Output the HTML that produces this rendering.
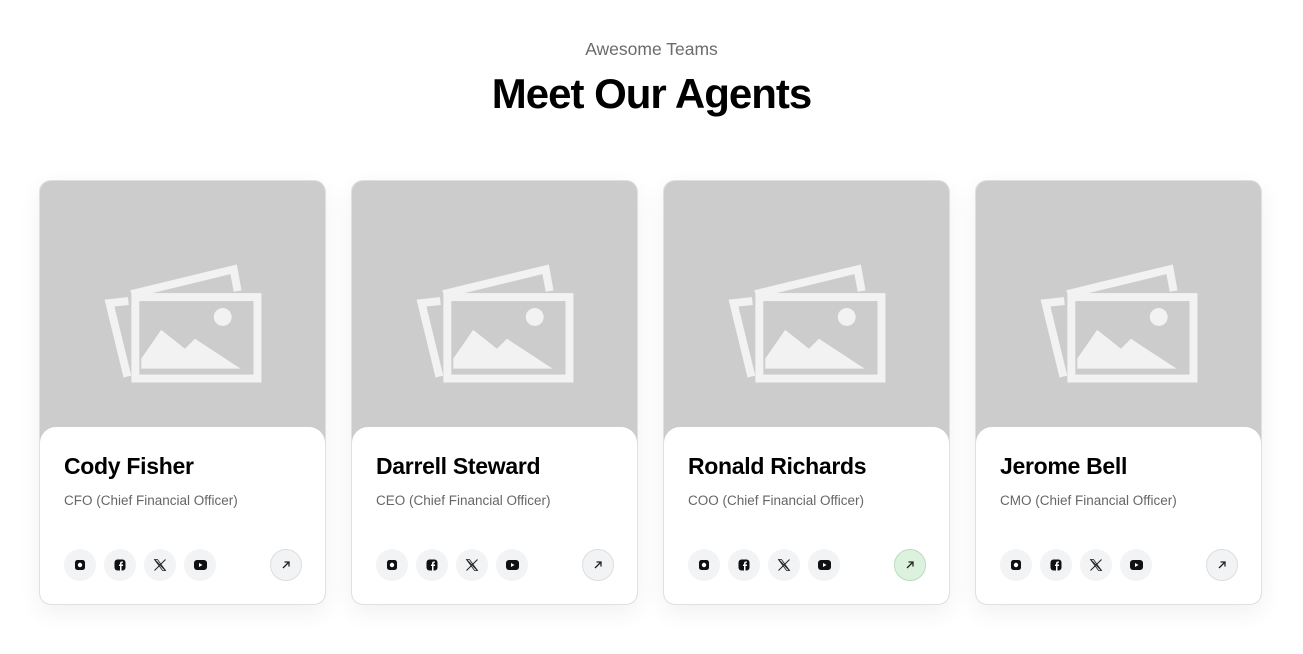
<!DOCTYPE html>
<html><head><meta charset="utf-8"><style>
*{box-sizing:border-box;margin:0;padding:0}
body{width:1303px;height:654px;background:#fff;font-family:"Liberation Sans",sans-serif;position:relative;overflow:hidden}
.sub{position:absolute;top:39px;width:100%;text-align:center;font-size:17.5px;color:#6b6b6b}
h1{position:absolute;top:70px;width:100%;text-align:center;font-size:42px;font-weight:700;color:#000;letter-spacing:-1px}
.card{position:absolute;top:180px;width:287px;height:425px;border:1px solid #e0e0e0;border-radius:12px;overflow:hidden;background:#ccc;box-shadow:0 8px 24px rgba(0,0,0,0.06)}
.img{position:absolute;left:0;top:0;width:100%;height:260px}
.panel{position:absolute;left:0;top:246px;width:100%;bottom:0;background:#fff;border-radius:16px 16px 0 0;padding:0 24px}
.name{position:absolute;top:26px;left:24px;font-size:23px;font-weight:700;color:#000;letter-spacing:-0.3px}
.role{position:absolute;top:66px;left:24px;font-size:13.5px;color:#666}
.ic{position:absolute;top:122px;width:32px;height:32px;border-radius:50%;background:#f2f3f5;display:flex;align-items:center;justify-content:center}
.ar{position:absolute;top:122px;left:230px;width:32px;height:32px;border-radius:50%;background:#f2f3f5;border:1px solid #ddd;display:flex;align-items:center;justify-content:center}
.ar.g{background:#dcf2de;border-color:#b9dcbc}
</style></head><body>
<div class="sub">Awesome Teams</div>
<h1>Meet Our Agents</h1>
<div class="card" style="left:39px">
<svg class="img" viewBox="0 0 287 260"><g fill="none" stroke="#f2f2f2" stroke-width="8"><path d="M89 120 L70 122 L88 196 M92 113 L195 88 L199 110"/><rect x="96" y="116" width="123" height="82"/></g><g fill="#f2f2f2"><circle cx="184" cy="136" r="9"/><path d="M102 188 L102 178 L122 149 L146 168 L156 158 L202 188Z"/></g></svg>
<div class="panel"><div class="name">Cody Fisher</div><div class="role">CFO (Chief Financial Officer)</div>
<div class="ic" style="left:24px"><svg width="12" height="12"><rect x="1" y="1" width="10" height="10" rx="2.5" fill="#111"/><circle cx="6" cy="6" r="2.2" fill="#fff"/></svg></div>
<div class="ic" style="left:64px"><svg width="12" height="12"><rect x="0.5" y="0.5" width="11" height="11" rx="3" fill="#111"/><path d="M7.5 12V7H9V5.5H7.5V4.5c0-.5.3-.7.8-.7H9V2.5H8C6.6 2.5 6 3.3 6 4.5v1H5V7h1v5" fill="#fff"/></svg></div>
<div class="ic" style="left:104px"><svg width="14" height="14"><path d="M1.5 1.5L12.5 12.5M12.5 1.5L1.5 12.5" stroke="#222" stroke-width="1"/><path d="M1.5 1.5h3l8 11h-3z" fill="none" stroke="#222" stroke-width="0.8"/></svg></div>
<div class="ic" style="left:144px"><svg width="13" height="10"><rect width="13" height="10" rx="3" fill="#111"/><path d="M5 3l3.5 2L5 7z" fill="#fff"/></svg></div>
<div class="ar"><svg width="10" height="10"><path d="M2 8L8 2M3.5 2H8V6.5" stroke="#222" stroke-width="1.3" fill="none"/></svg></div>
</div></div>
<div class="card" style="left:351px">
<svg class="img" viewBox="0 0 287 260"><g fill="none" stroke="#f2f2f2" stroke-width="8"><path d="M89 120 L70 122 L88 196 M92 113 L195 88 L199 110"/><rect x="96" y="116" width="123" height="82"/></g><g fill="#f2f2f2"><circle cx="184" cy="136" r="9"/><path d="M102 188 L102 178 L122 149 L146 168 L156 158 L202 188Z"/></g></svg>
<div class="panel"><div class="name">Darrell Steward</div><div class="role">CEO (Chief Financial Officer)</div>
<div class="ic" style="left:24px"><svg width="12" height="12"><rect x="1" y="1" width="10" height="10" rx="2.5" fill="#111"/><circle cx="6" cy="6" r="2.2" fill="#fff"/></svg></div>
<div class="ic" style="left:64px"><svg width="12" height="12"><rect x="0.5" y="0.5" width="11" height="11" rx="3" fill="#111"/><path d="M7.5 12V7H9V5.5H7.5V4.5c0-.5.3-.7.8-.7H9V2.5H8C6.6 2.5 6 3.3 6 4.5v1H5V7h1v5" fill="#fff"/></svg></div>
<div class="ic" style="left:104px"><svg width="14" height="14"><path d="M1.5 1.5L12.5 12.5M12.5 1.5L1.5 12.5" stroke="#222" stroke-width="1"/><path d="M1.5 1.5h3l8 11h-3z" fill="none" stroke="#222" stroke-width="0.8"/></svg></div>
<div class="ic" style="left:144px"><svg width="13" height="10"><rect width="13" height="10" rx="3" fill="#111"/><path d="M5 3l3.5 2L5 7z" fill="#fff"/></svg></div>
<div class="ar"><svg width="10" height="10"><path d="M2 8L8 2M3.5 2H8V6.5" stroke="#222" stroke-width="1.3" fill="none"/></svg></div>
</div></div>
<div class="card" style="left:663px">
<svg class="img" viewBox="0 0 287 260"><g fill="none" stroke="#f2f2f2" stroke-width="8"><path d="M89 120 L70 122 L88 196 M92 113 L195 88 L199 110"/><rect x="96" y="116" width="123" height="82"/></g><g fill="#f2f2f2"><circle cx="184" cy="136" r="9"/><path d="M102 188 L102 178 L122 149 L146 168 L156 158 L202 188Z"/></g></svg>
<div class="panel"><div class="name">Ronald Richards</div><div class="role">COO (Chief Financial Officer)</div>
<div class="ic" style="left:24px"><svg width="12" height="12"><rect x="1" y="1" width="10" height="10" rx="2.5" fill="#111"/><circle cx="6" cy="6" r="2.2" fill="#fff"/></svg></div>
<div class="ic" style="left:64px"><svg width="12" height="12"><rect x="0.5" y="0.5" width="11" height="11" rx="3" fill="#111"/><path d="M7.5 12V7H9V5.5H7.5V4.5c0-.5.3-.7.8-.7H9V2.5H8C6.6 2.5 6 3.3 6 4.5v1H5V7h1v5" fill="#fff"/></svg></div>
<div class="ic" style="left:104px"><svg width="14" height="14"><path d="M1.5 1.5L12.5 12.5M12.5 1.5L1.5 12.5" stroke="#222" stroke-width="1"/><path d="M1.5 1.5h3l8 11h-3z" fill="none" stroke="#222" stroke-width="0.8"/></svg></div>
<div class="ic" style="left:144px"><svg width="13" height="10"><rect width="13" height="10" rx="3" fill="#111"/><path d="M5 3l3.5 2L5 7z" fill="#fff"/></svg></div>
<div class="ar g"><svg width="10" height="10"><path d="M2 8L8 2M3.5 2H8V6.5" stroke="#222" stroke-width="1.3" fill="none"/></svg></div>
</div></div>
<div class="card" style="left:975px">
<svg class="img" viewBox="0 0 287 260"><g fill="none" stroke="#f2f2f2" stroke-width="8"><path d="M89 120 L70 122 L88 196 M92 113 L195 88 L199 110"/><rect x="96" y="116" width="123" height="82"/></g><g fill="#f2f2f2"><circle cx="184" cy="136" r="9"/><path d="M102 188 L102 178 L122 149 L146 168 L156 158 L202 188Z"/></g></svg>
<div class="panel"><div class="name">Jerome Bell</div><div class="role">CMO (Chief Financial Officer)</div>
<div class="ic" style="left:24px"><svg width="12" height="12"><rect x="1" y="1" width="10" height="10" rx="2.5" fill="#111"/><circle cx="6" cy="6" r="2.2" fill="#fff"/></svg></div>
<div class="ic" style="left:64px"><svg width="12" height="12"><rect x="0.5" y="0.5" width="11" height="11" rx="3" fill="#111"/><path d="M7.5 12V7H9V5.5H7.5V4.5c0-.5.3-.7.8-.7H9V2.5H8C6.6 2.5 6 3.3 6 4.5v1H5V7h1v5" fill="#fff"/></svg></div>
<div class="ic" style="left:104px"><svg width="14" height="14"><path d="M1.5 1.5L12.5 12.5M12.5 1.5L1.5 12.5" stroke="#222" stroke-width="1"/><path d="M1.5 1.5h3l8 11h-3z" fill="none" stroke="#222" stroke-width="0.8"/></svg></div>
<div class="ic" style="left:144px"><svg width="13" height="10"><rect width="13" height="10" rx="3" fill="#111"/><path d="M5 3l3.5 2L5 7z" fill="#fff"/></svg></div>
<div class="ar"><svg width="10" height="10"><path d="M2 8L8 2M3.5 2H8V6.5" stroke="#222" stroke-width="1.3" fill="none"/></svg></div>
</div></div>
</body></html>
